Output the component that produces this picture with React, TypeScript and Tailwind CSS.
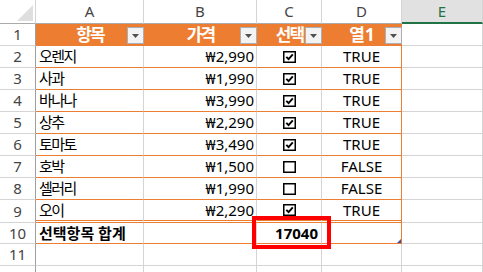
import React from "react";

const items: [string, string, boolean][] = [
  ["오렌지", "₩2,990", true],
  ["사과", "₩1,990", true],
  ["바나나", "₩3,990", true],
  ["상추", "₩2,290", true],
  ["토마토", "₩3,490", true],
  ["호박", "₩1,500", false],
  ["셀러리", "₩1,990", false],
  ["오이", "₩2,290", true],
];

function CheckBox({ checked }: { checked: boolean }) {
  return (
    <svg width="13" height="12" viewBox="0 0 13 12">
      <rect x="0.75" y="0.75" width="11.5" height="10.5" fill="#fff" stroke="#000" strokeWidth="1.5" />
      {checked && <path d="M3.3 5.8 L5.6 8.2 L9.8 3.4" fill="none" stroke="#000" strokeWidth="1.9" />}
    </svg>
  );
}

function FilterButton() {
  return (
    <div className="absolute right-0 top-[3px] flex h-[17px] w-[17px] items-center justify-center border border-[#a9afb6] bg-[#f3f3f3]">
      <svg width="7" height="4" viewBox="0 0 7 4" className="mt-[1px]">
        <path d="M0 0h7L3.5 4z" fill="#505050" />
      </svg>
    </div>
  );
}

function RowHead({ n }: { n: number }) {
  return (
    <div className="flex w-[36px] shrink-0 items-center justify-center border-r border-b border-r-[#9f9f9f] border-b-[#d4d4d4] text-[15px] font-normal text-[#444]">
      {n}
    </div>
  );
}

export default function App() {
  return (
    <div className="relative h-[272px] w-[483px] overflow-hidden bg-white font-['Noto_Sans','Noto_Sans_CJK_KR',sans-serif] text-black">
      {/* column headers */}
      <div className="flex h-[24px] text-[15px] text-[#444]">
        <div className="relative w-[36px] shrink-0 border-r border-b border-r-[#d4d4d4] border-b-[#ababab]">
          <svg width="16" height="16" viewBox="0 0 16 16" className="absolute right-[2px] bottom-[2px]">
            <path d="M16 0V16H0z" fill="#dfdfdf" />
          </svg>
        </div>
        {[
          ["A", "w-[108px]"],
          ["B", "w-[113px]"],
          ["C", "w-[65px]"],
          ["D", "w-[80px]"],
        ].map(([l, w]) => (
          <div key={l} className={`${w} flex shrink-0 items-center justify-center border-r border-b border-r-[#d4d4d4] border-b-[#ababab]`}>
            {l}
          </div>
        ))}
        <div className="flex w-[81px] shrink-0 items-center justify-center border-r border-b-2 border-r-[#d4d4d4] border-b-[#217346] bg-[#e1e1e1] text-[#217346]">
          E
        </div>
      </div>

      {/* table header row */}
      <div className="flex h-[22px]">
        <RowHead n={1} />
        <div className="flex shrink-0 bg-[#ed7d31] text-[17px] font-bold tracking-[-2px] text-white">
          <div className="relative flex w-[108px] items-center justify-center">
            항목
            <FilterButton />
          </div>
          <div className="relative flex w-[113px] items-center justify-center">
            가격
            <FilterButton />
          </div>
          <div className="relative flex w-[65px] items-center justify-center">
            선택
            <FilterButton />
          </div>
          <div className="relative flex w-[80px] items-center justify-center tracking-normal">
            열1
            <FilterButton />
          </div>
        </div>
        <div className="w-[81px] shrink-0 border-r border-b border-[#d4d4d4]" />
      </div>

      {/* data rows */}
      {items.map(([name, price, checked], i) => {
        const last = i === items.length - 1;
        const bottom = last
          ? "border-b-[3px] border-double border-b-[#ed7d31]"
          : "border-b border-b-[#ed7d31]";
        return (
          <div key={name} className={`flex ${last ? "h-[23px]" : "h-[22px]"} text-[15px]`}>
            <RowHead n={i + 2} />
            <div className={`flex w-[108px] shrink-0 items-center border-r border-r-[#d4d4d4] pl-[3px] tracking-[-1.5px] ${bottom}`}>
              {name}
            </div>
            <div className={`flex w-[113px] shrink-0 items-center justify-end border-r border-r-[#d4d4d4] pr-[2px] ${bottom}`}>
              {price}
            </div>
            <div className={`flex w-[65px] shrink-0 items-center justify-center border-r border-r-[#d4d4d4] ${bottom}`}>
              <CheckBox checked={checked} />
            </div>
            <div className={`flex w-[80px] shrink-0 items-center justify-center border-r border-r-[#ed7d31] ${bottom}`}>
              {checked ? "TRUE" : "FALSE"}
            </div>
            <div className="w-[81px] shrink-0 border-r border-b border-[#d4d4d4]" />
          </div>
        );
      })}

      {/* total row */}
      <div className="flex h-[21px] text-[15px]">
        <RowHead n={10} />
        <div className="flex w-[108px] shrink-0 items-center border-r border-b border-r-[#d4d4d4] border-b-[#ed7d31] pl-[3px] font-bold">
          선택항목 합계
        </div>
        <div className="w-[113px] shrink-0 border-r border-b border-r-[#d4d4d4] border-b-[#ed7d31]" />
        <div className="flex w-[65px] shrink-0 items-center justify-end border-r border-b border-r-[#d4d4d4] border-b-[#ed7d31] pr-[3px] font-bold">
          17040
        </div>
        <div className="relative w-[80px] shrink-0 border-r border-b border-[#ed7d31]">
          <svg width="4" height="4" viewBox="0 0 4 4" className="absolute right-0 bottom-0">
            <path d="M4 0V4H0z" fill="#3f4fa6" />
          </svg>
        </div>
        <div className="w-[81px] shrink-0 border-r border-b border-[#d4d4d4]" />
      </div>

      {/* empty rows */}
      {[11, 12].map((n) => (
        <div key={n} className="flex h-[22px]">
          <RowHead n={n} />
          <div className="w-[108px] shrink-0 border-r border-b border-[#d4d4d4]" />
          <div className="w-[113px] shrink-0 border-r border-b border-[#d4d4d4]" />
          <div className="w-[65px] shrink-0 border-r border-b border-[#d4d4d4]" />
          <div className="w-[80px] shrink-0 border-r border-b border-[#d4d4d4]" />
          <div className="w-[81px] shrink-0 border-r border-b border-[#d4d4d4]" />
        </div>
      ))}

      {/* red highlight box */}
      <div className="absolute left-[252px] top-[216px] h-[33px] w-[79px] border-4 border-[#ff0000]" />
    </div>
  );
}
